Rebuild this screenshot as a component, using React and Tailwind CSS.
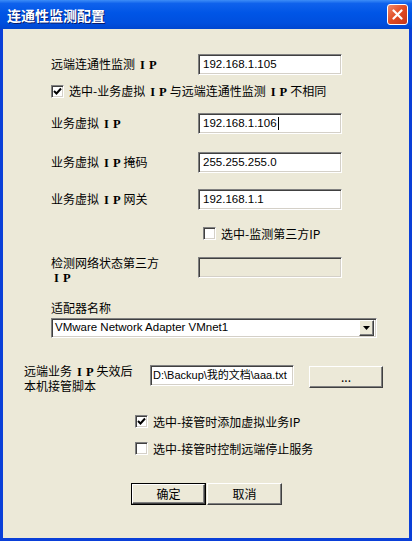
import React from "react";

const CJK = "font-['SimSun','Noto_Sans_CJK_SC',sans-serif]";

function Sunken({ className = "", children, disabled }) {
  return (
    <div
      className={`box-border border border-t-[#808080] border-l-[#808080] border-b-white border-r-white shadow-[inset_1px_1px_0_#404040,inset_-1px_-1px_0_#d4d0c8] ${disabled ? "bg-[#ECE9D8]" : "bg-white"} ${className}`}
    >
      {children}
    </div>
  );
}

function TextBox({ value, cursor, className = "w-[144px] h-[21px]", disabled, pad = "pl-[4px]" }) {
  return (
    <Sunken disabled={disabled} className={`flex items-center overflow-hidden ${pad} ${className}`}>
      <span className="font-['Liberation_Sans','Noto_Sans_CJK_SC',sans-serif] text-[11.5px] leading-none text-black whitespace-nowrap">
        {value}
      </span>
      {cursor && <span className="w-px h-[13px] bg-black ml-px" />}
    </Sunken>
  );
}

function CheckBox({ checked }) {
  return (
    <Sunken className="w-[13px] h-[13px] flex items-center justify-center shrink-0">
      {checked && (
        <svg width="9" height="9" viewBox="0 0 9 9">
          <path d="M1 4 L3.5 6.5 L8 1.5" stroke="#000" strokeWidth="2" fill="none" />
        </svg>
      )}
    </Sunken>
  );
}

function Check({ checked, label, className = "" }) {
  return (
    <div className={`flex items-center h-[13px] ${className}`}>
      <CheckBox checked={checked} />
      <span className={`${CJK} ml-[5px] text-[12px] leading-none text-black whitespace-nowrap`}>{label}</span>
    </div>
  );
}

function IP() {
  return (
    <span className="font-bold font-['Liberation_Serif',serif] text-[12.5px]">
      <span className="ml-[5px]">I</span>
      <span className="ml-[4px] mr-[3px]">P</span>
    </span>
  );
}

function Btn({ children, isDefault, className = "" }) {
  return (
    <div
      className={`box-border flex items-center justify-center bg-[#ECE9D8] ${isDefault ? "border border-black" : ""} ${className}`}
    >
      <div className="w-full h-full flex items-center justify-center border border-t-white border-l-white border-b-[#404040] border-r-[#404040] shadow-[inset_-1px_-1px_0_#808080]">
        <span className={`${CJK} text-[12px] leading-none text-black`}>{children}</span>
      </div>
    </div>
  );
}

export default function App() {
  return (
    <div className="w-[412px] h-[541px] flex flex-col bg-[#0a3fd8] overflow-hidden">
      <div className="h-[29px] shrink-0 flex items-center justify-between pl-[7px] pr-[4px] bg-[linear-gradient(to_bottom,#3d8df7_0%,#0f62ec_12%,#0055e6_45%,#004fde_80%,#0046cf_100%)]">
        <span className={`${CJK} text-white font-bold text-[14px] leading-none [text-shadow:1px_1px_0_#0a1a6a]`}>
          连通性监测配置
        </span>
        <div className="w-[21px] h-[21px] rounded-[3px] border border-white bg-[linear-gradient(135deg,#f0896a,#e04a22_50%,#c5361a)] flex items-center justify-center">
          <svg width="11" height="11" viewBox="0 0 11 11">
            <path d="M1.5 1.5 L9.5 9.5 M9.5 1.5 L1.5 9.5" stroke="#fff" strokeWidth="2.2" strokeLinecap="round" />
          </svg>
        </div>
      </div>

      <div className={`flex-1 mx-[3px] mb-[3px] bg-[#ECE9D8] flex flex-col ${CJK} text-[12px] text-black`}>
        {/* R1 */}
        <div className="mt-[25px] flex items-center pl-[48px]">
          <span className="w-[147px] leading-none whitespace-nowrap">
            远端连通性监测<IP />
          </span>
          <TextBox value="192.168.1.105" />
        </div>
        {/* R2 */}
        <Check checked className="mt-[10px] ml-[48px]" label={<>选中-业务虚拟<IP />与远端连通性监测<IP />不相同</>} />
        {/* R3 */}
        <div className="mt-[15px] flex items-center pl-[48px]">
          <span className="w-[147px] leading-none">业务虚拟<IP /></span>
          <TextBox value="192.168.1.106" cursor />
        </div>
        {/* R4 */}
        <div className="mt-[18px] flex items-center pl-[48px]">
          <span className="w-[147px] leading-none">业务虚拟<IP />掩码</span>
          <TextBox value="255.255.255.0" />
        </div>
        {/* R5 */}
        <div className="mt-[16px] flex items-center pl-[48px]">
          <span className="w-[147px] leading-none">业务虚拟<IP />网关</span>
          <TextBox value="192.168.1.1" />
        </div>
        {/* R6 */}
        <Check className="mt-[17px] ml-[200px]" label="选中-监测第三方IP" />
        {/* R7 */}
        <div className="mt-[16px] flex items-start pl-[48px]">
          <div className="w-[147px] leading-[14px]">
            <div>检测网络状态第三方</div>
            <div className="-ml-[2px]"><IP /></div>
          </div>
          <TextBox value="" disabled className="w-[144px] h-[21px] mt-[1px]" />
        </div>
        {/* R8 */}
        <div className="mt-[16px] pl-[48px] leading-[14px]">适配器名称</div>
        {/* R9 */}
        <div className="mt-[3px] ml-[48px]">
          <Sunken className="w-[326px] h-[20px] flex items-center justify-between pl-[3px] pr-[2px]">
            <span className="font-['Liberation_Sans',sans-serif] text-[11.5px] leading-none">VMware Network Adapter VMnet1</span>
            <div className="w-[15px] h-[16px] bg-[#ECE9D8] border border-t-white border-l-white border-b-[#404040] border-r-[#404040] shadow-[inset_-1px_-1px_0_#808080] flex items-center justify-center">
              <svg width="7" height="4" viewBox="0 0 7 4"><path d="M0 0 H7 L3.5 4 Z" fill="#000" /></svg>
            </div>
          </Sunken>
        </div>
        {/* R10 */}
        <div className="mt-[26px] flex items-start pl-[21px]">
          <div className="w-[126px] leading-[14px]">
            <div className="whitespace-nowrap">远端业务<IP />失效后</div>
            <div>本机接管脚本</div>
          </div>
          <div className="mt-[1px] w-[144px] h-[21px] flex items-center overflow-hidden pl-[2px] box-border border border-t-[#808080] border-l-[#808080] border-b-white border-r-white shadow-[inset_1px_1px_0_#404040,inset_-1px_-1px_0_#d4d0c8] bg-white">
            <span className="font-['Liberation_Sans','Noto_Sans_CJK_SC',sans-serif] text-[11px] leading-none whitespace-nowrap">
              D:\Backup\我的文档\aaa.txt
            </span>
          </div>
          <Btn className="ml-[15px] mt-[2px] w-[74px] h-[22px]">...</Btn>
        </div>
        {/* R11 */}
        <Check checked className="mt-[22px] ml-[132px]" label="选中-接管时添加虚拟业务IP" />
        {/* R12 */}
        <Check className="mt-[14px] ml-[132px]" label="选中-接管时控制远端停止服务" />
        {/* R13 */}
        <div className="mt-[28px] flex pl-[128px] gap-[1px]">
          <Btn isDefault className="w-[75px] h-[22px]">确定</Btn>
          <Btn className="w-[75px] h-[22px]">取消</Btn>
        </div>
      </div>
    </div>
  );
}
